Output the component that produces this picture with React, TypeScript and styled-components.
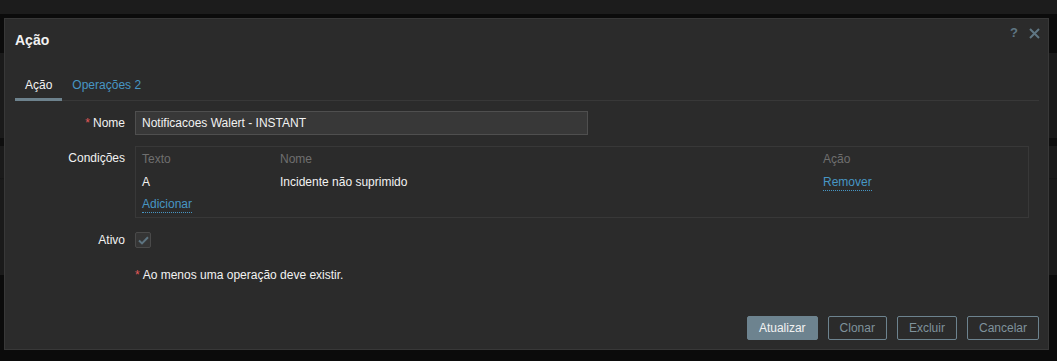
import React from 'react';
import styled, { createGlobalStyle } from 'styled-components';

const GlobalStyle = createGlobalStyle`
	html, body {
		margin: 0;
		padding: 0;
		background: #0b0b0b;
		font-family: 'Liberation Sans', Arial, sans-serif;
		font-size: 12px;
		color: #f2f2f2;
	}
`;

// page behind the modal, dimmed
const Page = styled.div`
	width: 1057px;
	height: 361px;
	overflow: hidden;
	box-sizing: border-box;
	padding: 18px 8px 0 4px;
	background: linear-gradient(
		to bottom,
		#1c1c1c 0px,
		#1c1c1c 14px,
		#0b0b0b 14px,
		#0b0b0b 53px,
		#1a1a1a 53px,
		#1a1a1a 138px,
		#0e0e0e 138px,
		#0e0e0e 146px,
		#1a1a1a 146px,
		#1a1a1a 178px,
		#141414 178px,
		#1a1a1a 180px,
		#1a1a1a 275px,
		#0b0b0b 275px
	);
`;

const Dialog = styled.div`
	width: 1045px;
	height: 332px;
	box-sizing: border-box;
	background: #2b2b2b;
	border: 1px solid #383838;
	display: flex;
	flex-direction: column;
`;

const Header = styled.div`
	display: flex;
	justify-content: space-between;
	align-items: flex-start;
	padding: 6px 8px 0 10px;
`;

const Title = styled.h4`
	margin: 6px 0 0;
	font-size: 14px;
	line-height: 18px;
	font-weight: bold;
	color: #f2f2f2;
`;

const Controls = styled.div`
	display: flex;
	align-items: center;
	gap: 11px;
	height: 16px;
`;

const HelpIcon = styled.span`
	color: #5f7683;
	font-size: 13px;
	font-weight: bold;
	line-height: 16px;
`;

const Body = styled.div`
	padding: 0 9px 0 10px;
`;

const TabList = styled.ul`
	list-style: none;
	margin: 22px 0 0;
	padding: 0;
	display: flex;
	border-bottom: 1px solid #383838;
`;

const Tab = styled.li<{ active?: boolean }>`
	padding: 6px 10px 5px;
	line-height: 16px;
	margin-bottom: -1px;
	border-bottom: 3px solid ${(p) => (p.active ? '#6d828d' : 'transparent')};
	color: ${(p) => (p.active ? '#f2f2f2' : '#4796c4')};
`;

const Form = styled.div`
	display: grid;
	grid-template-columns: 110px 1fr;
	column-gap: 10px;
	margin-top: 10px;
`;

const Label = styled.div<{ top?: number }>`
	text-align: right;
	line-height: 16px;
	padding-top: ${(p) => p.top ?? 4}px;
`;

const Field = styled.div<{ gap?: number }>`
	margin-bottom: ${(p) => p.gap ?? 0}px;
`;

const Req = styled.span`
	color: #e45959;
	margin-right: 3px;
`;

const Input = styled.input`
	box-sizing: border-box;
	width: 453px;
	height: 24px;
	padding: 0 6px;
	background: #383838;
	border: 1px solid #4f4f4f;
	color: #f2f2f2;
	font-family: inherit;
	font-size: 12px;
	outline: none;
`;

const CondBox = styled.div`
	box-sizing: border-box;
	width: 894px;
	border: 1px solid #383838;
	padding: 4px 0 4px 6px;
`;

const CondRow = styled.div<{ top?: number }>`
	display: grid;
	grid-template-columns: 138px 543px 1fr;
	line-height: 16px;
	margin-top: ${(p) => p.top ?? 0}px;
`;

const HeadCell = styled.div`
	color: #6f6f6f;
`;

const Link = styled.a`
	color: #4796c4;
	text-decoration: none;
	border-bottom: 1px dotted #4796c4;
	cursor: pointer;
	justify-self: start;
`;

const CheckBox = styled.span`
	display: flex;
	align-items: center;
	justify-content: center;
	box-sizing: border-box;
	width: 16px;
	height: 16px;
	background: #353535;
	border: 1px solid #4a4a4a;
	border-radius: 2px;
`;

const Note = styled.div`
	line-height: 16px;
	color: #f2f2f2;
`;

const Footer = styled.div`
	margin-top: auto;
	display: flex;
	justify-content: flex-end;
	gap: 10px;
	padding: 0 9px 9px 0;
`;

const Button = styled.button<{ primary?: boolean }>`
	box-sizing: border-box;
	height: 24px;
	padding: 0 11px;
	font-family: inherit;
	font-size: 12px;
	border-radius: 2px;
	border: 1px solid #6d838f;
	background: ${(p) => (p.primary ? '#6d838f' : 'transparent')};
	color: ${(p) => (p.primary ? '#f2f2f2' : '#7f929c')};
`;

const CloseIcon = () => (
	<svg width="11" height="11" viewBox="0 0 11 11">
		<path d="M1 1L10 10M10 1L1 10" stroke="#5f7683" strokeWidth="2" />
	</svg>
);

const CheckIcon = () => (
	<svg width="11" height="9" viewBox="0 0 11 9">
		<path d="M1 4.5L4 7.4L10 1.2" stroke="#5d7481" strokeWidth="2" fill="none" />
	</svg>
);

const App: React.FC = () => {
	return (
		<Page>
			<GlobalStyle />
			<Dialog>
				<Header>
					<Title>Ação</Title>
					<Controls>
						<HelpIcon>?</HelpIcon>
						<CloseIcon />
					</Controls>
				</Header>
				<Body>
					<TabList>
						<Tab active>Ação</Tab>
						<Tab>Operações 2</Tab>
					</TabList>
					<Form>
						<Label>
							<Req>*</Req>Nome
						</Label>
						<Field gap={11}>
							<Input defaultValue="Notificacoes Walert - INSTANT" />
						</Field>

						<Label top={4}>Condições</Label>
						<Field gap={14}>
							<CondBox>
								<CondRow>
									<HeadCell>Texto</HeadCell>
									<HeadCell>Nome</HeadCell>
									<HeadCell>Ação</HeadCell>
								</CondRow>
								<CondRow top={7}>
									<div>A</div>
									<div>Incidente não suprimido</div>
									<Link>Remover</Link>
								</CondRow>
								<CondRow top={5}>
									<Link>Adicionar</Link>
								</CondRow>
							</CondBox>
						</Field>

						<Label top={0}>Ativo</Label>
						<Field gap={19}>
							<CheckBox>
								<CheckIcon />
							</CheckBox>
						</Field>

						<div />
						<Note>
							<Req>*</Req>Ao menos uma operação deve existir.
						</Note>
					</Form>
				</Body>
				<Footer>
					<Button primary>Atualizar</Button>
					<Button>Clonar</Button>
					<Button>Excluir</Button>
					<Button>Cancelar</Button>
				</Footer>
			</Dialog>
		</Page>
	);
};

export default App;
